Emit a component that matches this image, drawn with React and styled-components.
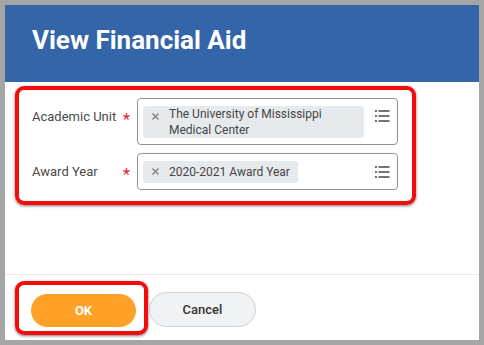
import React from "react";
import styled, { createGlobalStyle } from "styled-components";

const Global = createGlobalStyle`
  html, body { margin: 0; padding: 0; background: #a5a5a5; }
  body { font-family: Roboto, "Liberation Sans", Arial, sans-serif; }
  * { box-sizing: border-box; }
`;

const Panel = styled.div`
  margin: 5px;
  width: 474px;
  height: 335px;
  background: #ffffff;
  display: flex;
  flex-direction: column;
`;

const Header = styled.header`
  height: 77px;
  background: #3365a8;
  padding: 20px 0 0 27px;
`;

const Title = styled.h1`
  margin: 0;
  font-size: 26px;
  line-height: 30px;
  font-weight: 700;
  color: #ffffff;
`;

const Body = styled.div`
  height: 193px;
  padding: 4px 0 0 10px;
  border-bottom: 1px solid #eaeaea;
`;

const Highlight = styled.div`
  border: 4px solid #f40b0b;
  border-radius: 9px;
  box-shadow: 0 1px 3px rgba(0, 0, 0, 0.55);
`;

const FieldBox = styled(Highlight)`
  width: 401px;
  height: 119px;
  padding: 8px 0 0 13px;
  display: flex;
  flex-direction: column;
  gap: 8px;
`;

const Row = styled.div`
  display: flex;
  align-items: flex-start;
`;

const LabelCell = styled.div`
  width: 105px;
  padding: 11px 7px 0 0;
  display: flex;
  justify-content: space-between;
  font-size: 13px;
  line-height: 16px;
  color: #4a4a4a;
`;

const Required = styled.span`
  color: #e1252b;
  font-size: 17px;
  line-height: 16px;
  margin-top: 2px;
`;

const Input = styled.div`
  width: 261px;
  border: 1px solid #8c929a;
  border-radius: 4px;
  padding: 7px 7px 6px 5px;
  display: flex;
  align-items: flex-start;
  justify-content: space-between;
`;

const Chip = styled.div`
  max-width: 221px;
  background: #e7eaed;
  border-radius: 3px;
  padding: ${(p) => (p.$wrapped ? "0 8px 0 9px" : "3px 8px 3px 9px")};
  display: flex;
  align-items: flex-start;
  gap: 10px;
  font-size: 12px;
  line-height: 16px;
  color: #454545;
`;

const Remove = styled.svg`
  flex: none;
  width: 7px;
  height: 7px;
  margin-top: ${(p) => (p.$wrapped ? "7px" : "4px")};
`;

const ListIcon = styled.svg`
  flex: none;
  width: 15px;
  height: 12px;
  margin-top: ${(p) => (p.$wrapped ? "4px" : "5px")};
`;

const Footer = styled.footer`
  flex: 1;
  display: flex;
  align-items: center;
  padding: 1px 0 0 10px;
`;

const ButtonBox = styled(Highlight)`
  width: 133px;
  height: 54px;
  padding: 9px 8px 4px 12px;
  display: flex;
`;

const Button = styled.button`
  font-family: Roboto, "Liberation Sans", Arial, sans-serif;
  font-size: 13px;
  border-radius: 18px;
  cursor: pointer;
  width: ${(p) => (p.$primary ? "105px" : "107px")};
  height: ${(p) => (p.$primary ? "33px" : "35px")};
  font-weight: ${(p) => (p.$primary ? 700 : 500)};
  color: ${(p) => (p.$primary ? "#ffffff" : "#333333")};
  background: ${(p) => (p.$primary ? "#ffa126" : "#f0f2f4")};
  border: ${(p) => (p.$primary ? "none" : "1px solid #cdd2d7")};
  margin: ${(p) => (p.$primary ? "0" : "3px 0 0 1px")};
`;

const XIcon = ({ wrapped }) => (
  <Remove $wrapped={wrapped} viewBox="0 0 7 7">
    <path d="M0.5 0.5 L6.5 6.5 M6.5 0.5 L0.5 6.5" stroke="#6f7782" strokeWidth="1.1" />
  </Remove>
);

const Prompt = ({ wrapped }) => (
  <ListIcon $wrapped={wrapped} viewBox="0 0 15 12">
    <g fill="#6b7480">
      <rect x="0" y="0" width="2" height="2" />
      <rect x="3.5" y="0" width="11" height="2" />
      <rect x="0" y="5" width="2" height="2" />
      <rect x="3.5" y="5" width="11" height="2" />
      <rect x="0" y="10" width="2" height="2" />
      <rect x="3.5" y="10" width="11" height="2" />
    </g>
  </ListIcon>
);

const Field = ({ label, value, wrapped }) => (
  <Row>
    <LabelCell>
      <span>{label}</span>
      <Required>*</Required>
    </LabelCell>
    <Input>
      <Chip $wrapped={wrapped}>
        <XIcon wrapped={wrapped} />
        <span>{value}</span>
      </Chip>
      <Prompt wrapped={wrapped} />
    </Input>
  </Row>
);

export default function App() {
  return (
    <>
      <Global />
      <Panel>
        <Header>
          <Title>View Financial Aid</Title>
        </Header>
        <Body>
          <FieldBox>
            <Field
              label="Academic Unit"
              value="The University of Mississippi Medical Center"
              wrapped
            />
            <Field label="Award Year" value="2020-2021 Award Year" />
          </FieldBox>
        </Body>
        <Footer>
          <ButtonBox>
            <Button $primary>OK</Button>
          </ButtonBox>
          <Button>Cancel</Button>
        </Footer>
      </Panel>
    </>
  );
}
